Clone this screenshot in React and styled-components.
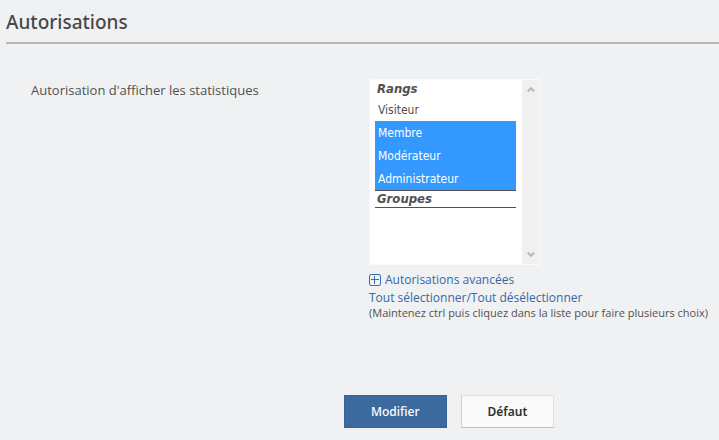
import React from "react";
import styled, { createGlobalStyle } from "styled-components";

const Global = createGlobalStyle`
  *, *::before, *::after { box-sizing: border-box; }
  body {
    margin: 0;
    background: #f0f1f3;
    color: #505050;
    font-family: "Trebuchet MS", "Open Sans", sans-serif;
    font-size: 12px;
    line-height: 18px;
  }
`;

const Page = styled.form`
  padding: 8px 0 12px 6px;
`;

const Title = styled.h1`
  margin: 0 0 35px;
  padding-bottom: 6px;
  border-bottom: 2px solid #b8b8b8;
  color: #484848;
  font-family: "Trebuchet MS", "Noto Sans", sans-serif;
  font-size: 19px;
  font-weight: 500;
  line-height: 28px;
`;

const Field = styled.div`
  display: grid;
  grid-template-columns: 338px 1fr;
  padding-left: 25px;
`;

const FieldLabel = styled.label`
  padding-top: 2px;
  font-size: 13px;
`;

const ListFrame = styled.div`
  display: flex;
  width: 171px;
  height: 186px;
  margin-bottom: 6px;
  background: #fff;
  border: 1px solid #fafafa;
`;

const List = styled.select`
  flex: 1;
  min-width: 0;
  padding: 1px 6px 1px 5px;
  border: 0;
  outline: 0;
  background: #fff;
  color: #505050;
  font-family: Tahoma, "DejaVu Sans Condensed", sans-serif;
  font-size: 12px;
  overflow: hidden;
  scrollbar-width: none;
`;

const Group = styled.optgroup`
  border-bottom: 1px solid #505050;
  font-size: 13px;
  font-style: italic;
  font-weight: bold;
  line-height: 16px;
`;

const Choice = styled.option`
  height: 23px;
  min-height: 23px;
  padding: 5px 3px 1px;
  font-size: 12px;
  font-style: normal;
  font-weight: normal;
  line-height: 17px;

  &:checked {
    background: #3399ff linear-gradient(#3399ff, #3399ff);
    color: #fff;
  }
`;

const Track = styled.div`
  display: flex;
  flex-direction: column;
  justify-content: space-between;
  align-items: center;
  width: 17px;
  padding: 6px 0;
  background: #f0f0f0;
`;

const Links = styled.div`
  color: #3c6a9f;
`;

const Link = styled.a`
  color: #3668a6;
  text-decoration: none;
`;

const AdvancedLink = styled(Link)`
  display: flex;
  align-items: center;
  gap: 4px;
`;

const Hint = styled.p`
  margin: 0;
  font-size: 11px;
  line-height: 12px;
`;

const Actions = styled.div`
  display: flex;
  gap: 14px;
  margin-top: 76px;
  padding-left: 338px;
`;

const Button = styled.button`
  flex: none;
  height: 33px;
  padding: 0 26px;
  border: 1px solid;
  border-color: ${(p) => (p.$primary ? "#34639b" : "#dedfe2 #dedfe2 #bfc0c2 #d0d1d3")};
  background: ${(p) => (p.$primary ? "#3c6a9f" : "#fafafa")};
  color: ${(p) => (p.$primary ? "#fff" : "#303030")};
  font-family: "Trebuchet MS", "Noto Sans", sans-serif;
  font-size: 12px;
  font-weight: ${(p) => (p.$primary ? 500 : 600)};
`;

const Chevron = ({ down }) => (
  <svg width="8" height="7" viewBox="0 0 8 7" aria-hidden="true">
    <path
      d={down ? "M0.7 1.5 4 4.8 7.3 1.5" : "M0.7 5.5 4 2.2 7.3 5.5"}
      fill="none"
      stroke="#b8b8b8"
      strokeWidth="2"
    />
  </svg>
);

const PlusBox = () => (
  <svg width="12" height="12" viewBox="0 0 12 12" aria-hidden="true">
    <rect x="0.5" y="0.5" width="11" height="11" rx="1.5" fill="none" stroke="#3c6db0" />
    <path d="M5.5 2v8M2 5.5h8" stroke="#3c6db0" />
  </svg>
);

export default function App() {
  return (
    <>
      <Global />
      <Page onSubmit={(e) => e.preventDefault()}>
        <Title>Autorisations</Title>
        <Field>
          <FieldLabel htmlFor="stats">Autorisation d'afficher les statistiques</FieldLabel>
          <div>
            <ListFrame>
              <List id="stats" multiple defaultValue={["membre", "moderateur", "admin"]}>
                <Group label="Rangs">
                  <Choice value="visiteur">Visiteur</Choice>
                  <Choice value="membre">Membre</Choice>
                  <Choice value="moderateur">Modérateur</Choice>
                  <Choice value="admin">Administrateur</Choice>
                </Group>
                <Group label="Groupes" />
              </List>
              <Track aria-hidden="true">
                <Chevron />
                <Chevron down />
              </Track>
            </ListFrame>
            <AdvancedLink href="#avancees">
              <PlusBox />
              Autorisations avancées
            </AdvancedLink>
            <Links>
              <Link href="#tout">Tout sélectionner</Link>/<Link href="#aucun">Tout désélectionner</Link>
            </Links>
            <Hint>(Maintenez ctrl puis cliquez dans la liste pour faire plusieurs choix)</Hint>
          </div>
        </Field>
        <Actions>
          <Button type="submit" $primary>Modifier</Button>
          <Button type="reset">Défaut</Button>
        </Actions>
      </Page>
    </>
  );
}
